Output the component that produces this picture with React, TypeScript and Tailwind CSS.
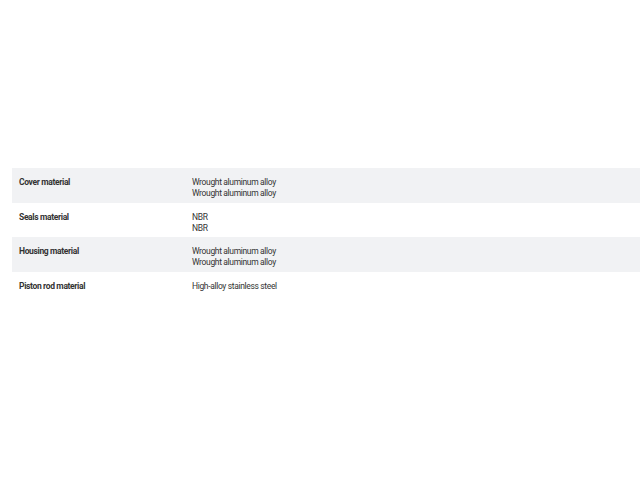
const rows = [
  { label: "Cover material", values: ["Wrought aluminum alloy", "Wrought aluminum alloy"] },
  { label: "Seals material", values: ["NBR", "NBR"] },
  { label: "Housing material", values: ["Wrought aluminum alloy", "Wrought aluminum alloy"] },
  { label: "Piston rod material", values: ["High-alloy stainless steel"] },
];

export default function App() {
  return (
    <div className="w-[640px] h-[480px] overflow-hidden bg-white pt-[168px] pl-3 text-[#333] font-['Roboto',sans-serif] text-[8.5px] leading-[11px] tracking-[-0.35px]">
      <div className="w-[700px]">
        {rows.map((row, i) => (
          <div
            key={row.label}
            className={`grid grid-cols-[173px_1fr] px-[7px] pt-[9px] pb-[3.67px] ${i % 2 === 0 ? "bg-[#f1f2f4]" : "bg-white"}`}
          >
            <div className="font-bold">{row.label}</div>
            <div>
              {row.values.map((v, j) => (
                <div key={j}>{v}</div>
              ))}
            </div>
          </div>
        ))}
      </div>
    </div>
  );
}
